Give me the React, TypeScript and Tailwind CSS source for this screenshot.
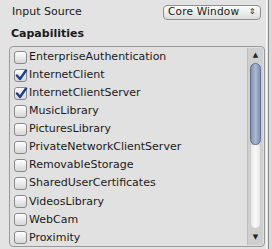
const caps: [string, boolean][] = [
  ["EnterpriseAuthentication", false],
  ["InternetClient", true],
  ["InternetClientServer", true],
  ["MusicLibrary", false],
  ["PicturesLibrary", false],
  ["PrivateNetworkClientServer", false],
  ["RemovableStorage", false],
  ["SharedUserCertificates", false],
  ["VideosLibrary", false],
  ["WebCam", false],
  ["Proximity", false],
];

function Box({ checked }: { checked: boolean }) {
  return (
    <div className="relative w-[13px] h-[13px] rounded-[3px] border border-[#8a8a8a] bg-gradient-to-b from-[#ffffff] to-[#d6d6d6] shrink-0">
      {checked && (
        <svg className="absolute left-[0px] top-[-1px]" width="13" height="13" viewBox="0 0 13 13">
          <path d="M2 6.5 L5 10 L11 1.5" fill="none" stroke="#1d3f8f" strokeWidth="2.4" strokeLinecap="round" strokeLinejoin="round" />
        </svg>
      )}
    </div>
  );
}

export default function App() {
  return (
    <div className="w-[272px] h-[249px] bg-[#e3e3e3] flex overflow-hidden text-[11px] text-[#1a1a1a]" style={{ fontFamily: '"DejaVu Sans", sans-serif' }}>
      <div className="w-[265px] flex flex-col">
        <div className="h-[24px] flex items-center pl-[12px] pr-[4px]">
          <span className="flex-1">Input Source</span>
          <div className="w-[98px] h-[15px] rounded-[4px] border border-[#8e8e8e] bg-gradient-to-b from-[#fdfdfd] to-[#dcdcdc] flex items-center pl-[4px] pr-[4px] text-[10.5px] tracking-[0.2px]">
            <span className="flex-1">Core Window</span>
            <span className="text-[8px] leading-none">⇕</span>
          </div>
        </div>
        <div className="pl-[11px] font-bold h-[21px] flex items-center">Capabilities</div>
        <div className="ml-[9px] mt-[1px] h-[201px] rounded-[4px] border border-[#9a9a9a] bg-[#e1e1e1] flex">
          <div className="flex-1 flex flex-col pt-[1px] pl-[4px]">
            {caps.map(([n, c]) => (
              <div key={n} className="h-[18.1px] flex items-center gap-[2px] shrink-0">
                <Box checked={c} />
                <span className="whitespace-nowrap">{n}</span>
              </div>
            ))}
          </div>
          <div className="w-[16px] flex flex-col bg-[#cfcfcf] border-l border-[#bdbdbd] my-[1px] mr-[1px]">
            <div className="h-[15px] flex items-center justify-center text-[7px] text-[#222]">▲</div>
            <div className="flex-1 flex flex-col px-[2px]">
              <div className="h-[82px] rounded-[6px] bg-gradient-to-r from-[#7f93b3] via-[#a9bad3] to-[#7f93b3] border border-[#5f6f8e]" />
              <div className="flex-1 rounded-b-[6px] bg-gradient-to-r from-[#e8e8e8] via-[#fafafa] to-[#e6e6e6] border border-[#cfcfcf] border-t-0 mb-[1px]" />
            </div>
            <div className="h-[15px] flex items-center justify-center text-[7px] text-[#222]">▼</div>
          </div>
        </div>
      </div>
      <div className="w-[1px] bg-[#fafafa] ml-[1px]" />
      <div className="w-[1px] bg-[#8c8c8c] ml-[1px]" />
      <div className="flex-1 bg-[#d8d8d8]" />
    </div>
  );
}
